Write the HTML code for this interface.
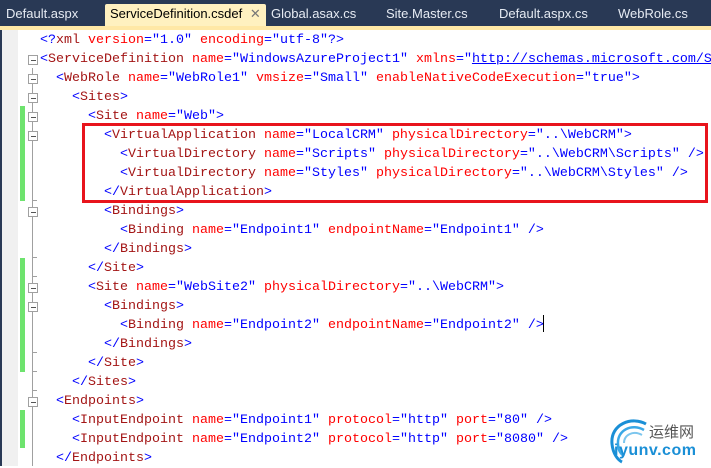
<!DOCTYPE html>
<html><head><meta charset="utf-8"><style>
*{margin:0;padding:0}
body{width:711px;height:466px;overflow:hidden;background:#fff;position:relative;font-family:"Liberation Sans",sans-serif}
#tabs{position:absolute;left:0;top:0;width:711px;height:26px;background:#293955}
.tab{position:absolute;top:6px;font-size:13px;color:#e6ebf3;white-space:nowrap}
#act{position:absolute;left:105px;top:4px;width:161px;height:23px;background:#fff1c0;border-radius:2px 2px 0 0}
#strip{position:absolute;left:0;top:26px;width:711px;height:4px;background:#ffe8a6}
#lm{position:absolute;left:0;top:30px;width:2px;height:436px;background:#293955}
#gut{position:absolute;left:2px;top:30px;width:16px;height:436px;background:#f0f0f0}
.g{position:absolute;left:20px;width:5px;background:#6ee36e}
#vl{position:absolute;left:32px;top:68px;width:1px;height:398px;background:#a0a0a0}
.fb{position:absolute;left:28px;width:8px;height:8px;border:1px solid #a0a0a0;background:#fff}
.fb:after{content:"";position:absolute;left:2px;top:4px;width:5px;height:1px;background:#555}
.tk{position:absolute;left:32px;width:5px;height:1px;background:#a0a0a0}
pre{position:absolute;left:40px;top:31px;font-family:"Liberation Mono",monospace;font-size:13.33px;line-height:19px;color:#0000ff}
.e{color:#a31515}.a{color:#ff0000}.u{text-decoration:underline}
#box{position:absolute;left:82px;top:123px;width:620px;height:74px;border:3px solid #e8141c}
#cur{position:absolute;left:543px;top:315px;width:1px;height:17px;background:#000}
</style></head><body>
<div id="tabs">
<div id="act"></div>
<div class="tab" style="left:6px">Default.aspx</div>
<div class="tab" style="left:110px;color:#000">ServiceDefinition.csdef <span style="color:#777;margin-left:4px">✕</span></div>
<div class="tab" style="left:271px">Global.asax.cs</div>
<div class="tab" style="left:386px">Site.Master.cs</div>
<div class="tab" style="left:499px">Default.aspx.cs</div>
<div class="tab" style="left:618px">WebRole.cs</div>
</div>
<div id="strip"></div>
<div id="lm"></div><div id="gut"></div>
<div class="g" style="top:106px;height:95px"></div>
<div class="g" style="top:258px;height:114px"></div>
<div class="g" style="top:410px;height:38px"></div>
<div id="vl"></div>
<div class="fb" style="top:55px"></div>
<div class="fb" style="top:74px"></div>
<div class="fb" style="top:93px"></div>
<div class="fb" style="top:112px"></div>
<div class="fb" style="top:131px"></div>
<div class="fb" style="top:207px"></div>
<div class="fb" style="top:283px"></div>
<div class="fb" style="top:302px"></div>
<div class="fb" style="top:397px"></div>
<div class="tk" style="top:200px"></div>
<div class="tk" style="top:257px"></div>
<div class="tk" style="top:276px"></div>
<div class="tk" style="top:352px"></div>
<div class="tk" style="top:371px"></div>
<div class="tk" style="top:390px"></div>
<pre>&lt;?<span class="e">xml</span> <span class="a">version</span>="1.0" <span class="a">encoding</span>="utf-8"?&gt;
&lt;<span class="e">ServiceDefinition</span> <span class="a">name</span>="WindowsAzureProject1" <span class="a">xmlns</span>="<span class="u">http://schemas.microsoft.com/S</span>
  &lt;<span class="e">WebRole</span> <span class="a">name</span>="WebRole1" <span class="a">vmsize</span>="Small" <span class="a">enableNativeCodeExecution</span>="true"&gt;
    &lt;<span class="e">Sites</span>&gt;
      &lt;<span class="e">Site</span> <span class="a">name</span>="Web"&gt;
        &lt;<span class="e">VirtualApplication</span> <span class="a">name</span>="LocalCRM" <span class="a">physicalDirectory</span>="..\WebCRM"&gt;
          &lt;<span class="e">VirtualDirectory</span> <span class="a">name</span>="Scripts" <span class="a">physicalDirectory</span>="..\WebCRM\Scripts" /&gt;
          &lt;<span class="e">VirtualDirectory</span> <span class="a">name</span>="Styles" <span class="a">physicalDirectory</span>="..\WebCRM\Styles" /&gt;
        &lt;/<span class="e">VirtualApplication</span>&gt;
        &lt;<span class="e">Bindings</span>&gt;
          &lt;<span class="e">Binding</span> <span class="a">name</span>="Endpoint1" <span class="a">endpointName</span>="Endpoint1" /&gt;
        &lt;/<span class="e">Bindings</span>&gt;
      &lt;/<span class="e">Site</span>&gt;
      &lt;<span class="e">Site</span> <span class="a">name</span>="WebSite2" <span class="a">physicalDirectory</span>="..\WebCRM"&gt;
        &lt;<span class="e">Bindings</span>&gt;
          &lt;<span class="e">Binding</span> <span class="a">name</span>="Endpoint2" <span class="a">endpointName</span>="Endpoint2" /&gt;
        &lt;/<span class="e">Bindings</span>&gt;
      &lt;/<span class="e">Site</span>&gt;
    &lt;/<span class="e">Sites</span>&gt;
  &lt;<span class="e">Endpoints</span>&gt;
    &lt;<span class="e">InputEndpoint</span> <span class="a">name</span>="Endpoint1" <span class="a">protocol</span>="http" <span class="a">port</span>="80" /&gt;
    &lt;<span class="e">InputEndpoint</span> <span class="a">name</span>="Endpoint2" <span class="a">protocol</span>="http" <span class="a">port</span>="8080" /&gt;
  &lt;/<span class="e">Endpoints</span>&gt;</pre>
<div id="box"></div>
<div id="cur"></div>
<svg style="position:absolute;left:606px;top:418px" width="50" height="46" viewBox="0 0 50 46">
<path d="M40 6 C26 -2 4 6 6 26 C7 36 12 42 16 44" stroke="#1a8fd6" stroke-width="3" fill="none"/>
<path d="M38 12 C26 5 11 12 12 26 C12 32 15 36 18 38" stroke="#3aa8e6" stroke-width="2.5" fill="none"/>
<path d="M36 17 C27 12 18 17 18 25" stroke="#7cc6ee" stroke-width="2" fill="none"/>
</svg>
<div style="position:absolute;left:649px;top:423px;font-family:'Noto Sans CJK SC',sans-serif;font-size:15px;line-height:18px;color:#555">运维网</div>
<div style="position:absolute;left:614px;top:442px;font-family:'Liberation Sans',sans-serif;font-weight:bold;font-size:16px;line-height:18px;color:#1a8fd6;letter-spacing:0.5px">iyunv.com</div>
</body></html>
